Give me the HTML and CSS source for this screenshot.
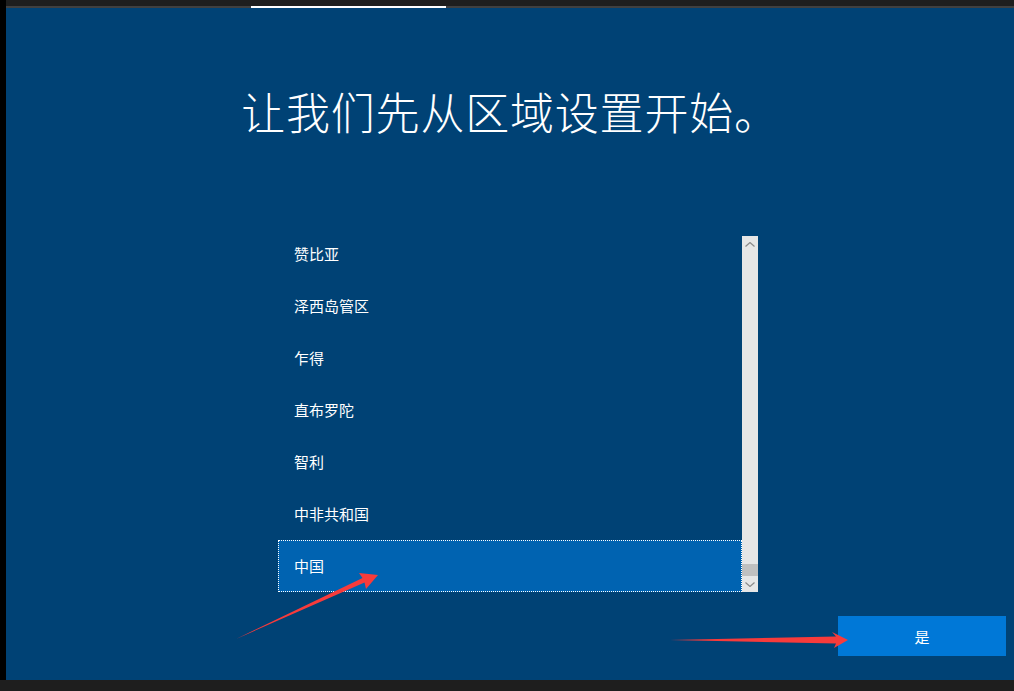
FILE: index.html
```html
<!DOCTYPE html>
<html lang="zh-CN">
<head>
<meta charset="utf-8">
<title>区域设置</title>
<link rel="stylesheet" href="styles.css">
</head>
<body>
<div class="screen">
  <div class="upper">
    <div class="left-strip"></div>
    <div class="window">
      <div class="topbar"></div>
      <div class="progress"><div class="progress-seg"></div></div>
      <main class="oobe">
        <h1 class="title">让我们先从区域设置开始。</h1>
        <div class="listbox">
          <div class="viewport">
            <ul class="items">
              <li class="item">赞比亚</li>
              <li class="item">泽西岛管区</li>
              <li class="item">乍得</li>
              <li class="item">直布罗陀</li>
              <li class="item">智利</li>
              <li class="item">中非共和国</li>
              <li class="item selected">中国</li>
            </ul>
          </div>
          <div class="scrollbar">
            <div class="sb-btn">
              <svg width="10" height="5" viewBox="0 0 10 5"><path d="M0.5 4.5 L5 0.5 L9.5 4.5" fill="none" stroke="#8a8a8a" stroke-width="1.2"/></svg>
            </div>
            <div class="sb-track"><div class="sb-thumb"></div></div>
            <div class="sb-btn">
              <svg width="10" height="5" viewBox="0 0 10 5"><path d="M0.5 0.5 L5 4.5 L9.5 0.5" fill="none" stroke="#8a8a8a" stroke-width="1.2"/></svg>
            </div>
          </div>
        </div>
        <div class="footer">
          <button class="yes">是</button>
        </div>
      </main>
    </div>
  </div>
  <div class="bottombar"></div>
  <svg class="annotations" width="1014" height="691" viewBox="0 0 1014 691">
    <polygon points="236,639 364.5,582.5 366,589 378,575 359,573 362.5,578 " fill="#f83b3b"/>
    <polygon points="670,640 836,636.5 832,632 848,640 834,648 836,643.5" fill="#f83b3b"/>
  </svg>
</div>
</body>
</html>
```

FILE: styles.css
```css
* { box-sizing: border-box; }
html, body { margin: 0; padding: 0; }
body {
  background: #1e1e1e;
  font-family: "Noto Sans CJK SC", "Noto Sans", sans-serif;
  overflow: hidden;
}
.screen {
  position: relative;
  width: 1014px;
  height: 691px;
  display: flex;
  flex-direction: column;
}
.upper {
  display: flex;
  height: 680px;
}
.left-strip {
  width: 6px;
  background: #000;
}
.window {
  flex: 1;
  display: flex;
  flex-direction: column;
}
.topbar {
  height: 6px;
  background: #1e1e1e;
}
.progress {
  height: 2px;
  background: #404040;
}
.progress-seg {
  margin-left: 245px;
  width: 195px;
  height: 2px;
  background: #ffffff;
}
.oobe {
  flex: 1;
  background: #004275;
  display: flex;
  flex-direction: column;
  padding-top: 77px;
}
.title {
  margin: 0;
  height: 52px;
  line-height: 52px;
  font-size: 44px;
  font-weight: 300;
  color: #ffffff;
  text-align: center;
  letter-spacing: 0.8px;
}
.listbox {
  margin-top: 99px;
  margin-left: 272px;
  width: 480px;
  height: 356px;
  display: flex;
}
.viewport {
  flex: 1;
  height: 356px;
  overflow: hidden;
}
.items {
  list-style: none;
  margin: -8px 0 0 0;
  padding: 0;
}
.item {
  height: 52px;
  line-height: 52px;
  padding-left: 16px;
  font-size: 15px;
  color: #ffffff;
}
.item.selected {
  background: #0063b1;
  outline: 1px dotted #ffffff;
  outline-offset: -1px;
}
.scrollbar {
  width: 16px;
  background: #e6e6e6;
  display: flex;
  flex-direction: column;
}
.sb-btn {
  height: 16px;
  display: flex;
  align-items: center;
  justify-content: center;
}
.sb-btn svg { display: block; }
.sb-track {
  flex: 1;
  display: flex;
  flex-direction: column;
  justify-content: flex-end;
}
.sb-thumb {
  height: 12px;
  background: #c0c0c0;
}
.footer {
  margin-top: auto;
  display: flex;
  justify-content: flex-end;
  padding: 0 8px 24px 0;
}
.yes {
  width: 168px;
  height: 40px;
  border: none;
  background: #0078d7;
  color: #ffffff;
  font-family: "Noto Sans CJK SC", "Noto Sans", sans-serif;
  font-size: 15px;
  padding: 0;
}
.bottombar {
  height: 11px;
  background: #1e1e1e;
}
.annotations {
  position: absolute;
  left: 0;
  top: 0;
  pointer-events: none;
}
```
